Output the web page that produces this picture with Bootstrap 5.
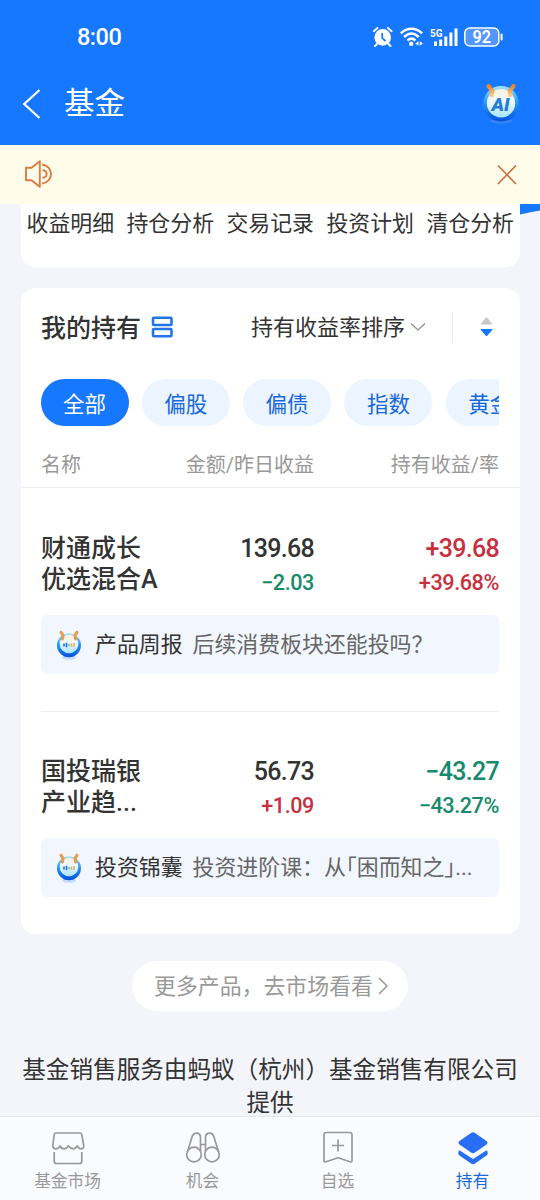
<!DOCTYPE html>
<html lang="zh-CN">
<head>
<meta charset="utf-8">
<meta name="viewport" content="width=device-width, initial-scale=1">
<title>基金</title>
<link href="https://cdn.jsdelivr.net/npm/bootstrap@5.3.0/dist/css/bootstrap.min.css" rel="stylesheet">
<style>
body{font-family:Roboto,"Noto Sans CJK SC",sans-serif;background:#f4f5fa;color:#333;height:1200px;overflow:hidden}
svg{display:block;flex:none}
.top-area{background:#1677ff;height:145px;color:#fff}
.status{height:74px;padding:0 36px 0 77px}
.clock{font-size:23.5px;line-height:24px;letter-spacing:-.5px;font-weight:500}
.title-row{height:60px;padding:0 20px 0 22px}
.page-title{font-size:30.5px;line-height:40px;font-weight:400;margin-left:23px}
.notice{background:#fffcea;height:59px;padding:0 22px 2px 24px}
.content{background:#f4f5fa;flex-basis:0}
.panel{background:#fff;margin:0 20px 0 21px}
.quick{height:63px;border-radius:0 0 14px 14px;font-size:21.9px;line-height:40px;padding:0 6px 0 5.5px;color:#333}
.hold{height:646px;margin-top:21px;border-radius:14px}
.hold-head{height:78px;padding:0 27px 0 20px}
.hold-title{font-size:25px;font-weight:500;line-height:36px;padding-top:3px}
.sort{font-size:22px;line-height:32px;padding-top:2px}
.vline{width:1px;height:31px;background:#eaeaea;margin:0 27px 0 25px}
.chips{margin:13px 21px 0 19.5px;gap:13.3px;height:47px}
.chip{width:88px;height:47px;flex:none;border-radius:24px;background:#ecf4ff;color:#1668dc;font-size:21.5px;line-height:51px;text-align:center}
.chip.on{background:#1677ff;color:#fff}
.heads{height:62px;border-bottom:1px solid #eee;font-size:20px;color:#999;padding:0 21px 0 20px;line-height:79px}
.col-a{width:137px}.col-b{width:136px;text-align:right}.col-c{flex:1;text-align:right}
.fund{height:224px;margin:0 21px 0 20px;padding-top:45px;border-bottom:1px solid #eee}
.fund:last-child{border-color:transparent;padding-top:44px}
.fname{font-size:25px;line-height:31px;font-weight:500;height:62px;white-space:nowrap}
.num{font-size:25px;line-height:31px;font-weight:500;letter-spacing:-.7px}
.subnum{font-size:21.6px;line-height:37px;font-weight:500;letter-spacing:-.4px}
.up{color:#c9303e}.down{color:#168a6a}
.tip{height:59px;margin-top:14px;background:#f2f7ff;border-radius:6px;font-size:21.9px;line-height:61px;padding-left:14px;color:#666;white-space:nowrap}
.tip b{font-weight:400;color:#333;margin:0 10px 0 12px}
.half{font-feature-settings:"halt"}
.more{width:276px;height:50px;margin:27px auto 0;background:#fff;border-radius:25px;color:#999;font-size:21.9px;padding-left:22px}
.more span{line-height:50px;padding-top:2px}
.legal{font-size:23.6px;line-height:33px;text-align:center;margin-top:43px}
.tabs{height:84px;background:#fafbff;border-top:1px solid #e6e7ea;color:#999;font-size:16.7px;line-height:20px}
.tabs svg{margin:13px auto 6px}
.tabs .col svg{position:relative}
.tabs .on{color:#1668dc}
.bluecurve{position:absolute;right:0;top:0}
</style>
</head>
<body class="d-flex flex-column">
<svg width="0" height="0" class="position-absolute">
<defs>
<linearGradient id="ring" x1="0" y1="0" x2="0" y2="1"><stop offset="0" stop-color="#a8e6fa"/><stop offset=".45" stop-color="#259cf5"/><stop offset="1" stop-color="#074fdb"/></linearGradient>
<linearGradient id="face" x1="0" y1="0" x2="0" y2="1"><stop offset="0" stop-color="#fff0da"/><stop offset=".45" stop-color="#ecf8ff"/><stop offset="1" stop-color="#a5e4ff"/></linearGradient>
<linearGradient id="horn" x1="0" y1="0" x2="0" y2="1"><stop offset="0" stop-color="#e38730"/><stop offset="1" stop-color="#ffc67b"/></linearGradient>
<symbol id="bot" viewBox="0 0 26 30">
<ellipse cx="13" cy="27.500" rx="7" ry="2.300" fill="#c3dcff"/>
<circle cx="13" cy="15.200" r="12" fill="url(#ring)"/><circle cx="13" cy="14" r="9.300" fill="url(#face)"/>
<path d="M5 2.200l2 3.200-.6 3.500M21 2.200l-2 3.200.6 3.500" fill="none" stroke="#ed9a48" stroke-width="3" stroke-linecap="round" stroke-linejoin="round"/>
<path d="M8 13.500v3M10.500 12.800v4.400" stroke="#1766d8" stroke-width="1.500"/><path d="M13 14v2.200" stroke="#38b6c8" stroke-width="1.400"/><path d="M15.500 13.500v3.200M18 13v4" stroke="#e6ad55" stroke-width="1.500"/>
</symbol>
</defs>
</svg>
<header class="top-area flex-shrink-0">
<div class="status d-flex align-items-center justify-content-between">
<span class="clock">8:00</span>
<svg width="132" height="24" viewBox="0 0 132 24" fill="none" stroke="#fff">
<circle cx="10.700" cy="12.400" r="8.300" fill="#fff" stroke="none"/><path d="M1.800 6.200L5.500 3M19.600 6.200L15.900 3M5 19l-2 2M16.500 19l2 2" stroke-width="2" stroke-linecap="round"/><path d="M10.200 8v5.200l3.300 2.800" stroke="#1677ff" stroke-width="1.700"/>
<path d="M28.800 8.300c6.500-6 14.800-6 21.300 0M32 12c4.800-4.500 10-4.500 14.800 0M35.500 15.500c2.500-2.300 5.400-2.300 7.900 0" stroke-width="2.500"/><circle cx="39.200" cy="18.800" r="2.200" fill="#fff" stroke="none"/><path d="M46.500 16.200v4.600l-3.200-2.300zM47.700 16.200v4.600l3.200-2.300z" fill="#fff" stroke="none"/>
<path d="M63.500 21v-4.500M68.700 21v-6.500M73.800 21v-9.500M78.900 21V7.500M84 21V3.500" stroke-width="3"/>
<text x="58" y="12" font-size="11.500" font-weight="700" fill="#fff" stroke="none" textLength="12.500" lengthAdjust="spacingAndGlyphs">5G</text>
<rect x="92.800" y="3" width="34" height="18" rx="5" fill="#5197ff" stroke-width="1.500"/><path d="M129.600 9.500v5" stroke-width="2" stroke-linecap="round"/>
<text x="109.700" y="18.200" font-size="17.500" font-weight="600" text-anchor="middle" fill="#fff" stroke="none" textLength="18.500" lengthAdjust="spacingAndGlyphs">92</text>
</svg>
</div>
<div class="title-row d-flex align-items-center">
<svg width="19" height="30" viewBox="0 0 19 30"><path d="M17.500 1L2.200 15l15.300 14" fill="none" stroke="#fff" stroke-width="2.200"/></svg>
<h1 class="page-title mb-0">基金</h1>
<svg class="ms-auto" width="38" height="40" viewBox="0 0 38 40">
<ellipse cx="19" cy="37" rx="11" ry="2.500" fill="#3c86ee"/>
<circle cx="19" cy="19.800" r="17.800" fill="url(#ring)"/><circle cx="19" cy="19.200" r="14.200" fill="url(#face)"/>
<path d="M6.500 2l3.800 5-.8 4M31.500 2l-3.800 5 .8 4" fill="none" stroke="url(#horn)" stroke-width="4" stroke-linecap="round" stroke-linejoin="round"/>
<text x="18.500" y="26.500" font-size="19" font-weight="900" font-style="italic" fill="#257cd8" text-anchor="middle">AI</text></svg>
</div>
</header>
<div class="notice d-flex align-items-center justify-content-between flex-shrink-0">
<svg width="30" height="30" viewBox="0 0 30 30" fill="none" stroke="#dc7c43" stroke-width="1.900" stroke-linejoin="round"><path d="M2 8.700h5.500L15.800 2.200v25.600L7.500 21.300H2zM18 5.500c12 1.500 12 17.500 0 19M18.500 11c5.500 1 5.500 7 0 8"/></svg>
<svg width="22" height="22" viewBox="0 0 22 22"><path d="M2 2.500l18 18.500M20 2.500L2 21" stroke="#d06c39" stroke-width="1.600"/></svg>
</div>
<main class="content flex-grow-1 overflow-hidden position-relative">
<svg class="bluecurve" width="20" height="12" viewBox="0 0 20 12"><path d="M0 0h20v6.500Q11 8 0 10.500z" fill="#1677ff"/></svg>
<section class="panel quick d-flex justify-content-between text-nowrap"><span>收益明细</span><span>持仓分析</span><span>交易记录</span><span>投资计划</span><span>清仓分析</span></section>
<section class="panel hold overflow-hidden">
<div class="hold-head d-flex align-items-center">
<span class="hold-title">我的持有</span>
<svg class="ms-2" width="25" height="24" viewBox="0 0 25 24" fill="none" stroke="#2474e5" stroke-width="2.600"><rect x="4" y="2.800" width="18.500" height="7.200" rx="1"/><rect x="4" y="14" width="18.500" height="7.200" rx="1"/></svg>
<span class="sort ms-auto">持有收益率排序</span>
<svg class="ms-1" width="18" height="12" viewBox="0 0 18 12"><path d="M2 2.500l7 6.500 7-6.500" fill="none" stroke="#999" stroke-width="1.500"/></svg>
<i class="vline"></i>
<svg width="13" height="22" viewBox="0 0 13 22"><path d="M6.500 1.500l5.300 6.500H1.200z" fill="#c8c8c8" stroke="#c8c8c8" stroke-linejoin="round"/><path d="M6.500 20L1 13.500h11z" fill="#1677ff" stroke="#1677ff" stroke-linejoin="round"/></svg>
</div>
<div class="chips d-flex overflow-hidden"><span class="chip on">全部</span><span class="chip">偏股</span><span class="chip">偏债</span><span class="chip">指数</span><span class="chip">黄金</span></div>
<div class="heads d-flex"><span class="col-a">名称</span><span class="col-b">金额/昨日收益</span><span class="col-c">持有收益/率</span></div>
<article class="fund">
<div class="d-flex"><div class="col-a fname">财通成长<br>优选混合A</div><div class="col-b"><div class="num">139.68</div><div class="subnum down">−2.03</div></div><div class="col-c"><div class="num up">+39.68</div><div class="subnum up">+39.68%</div></div></div>
<div class="tip d-flex align-items-center"><svg width="28" height="30"><use href="#bot"/></svg><b>产品周报</b><span>后续消费板块还能投吗？</span></div>
</article>
<article class="fund">
<div class="d-flex"><div class="col-a fname">国投瑞银<br>产业趋...</div><div class="col-b"><div class="num">56.73</div><div class="subnum up">+1.09</div></div><div class="col-c"><div class="num down">−43.27</div><div class="subnum down">−43.27%</div></div></div>
<div class="tip d-flex align-items-center"><svg width="28" height="30"><use href="#bot"/></svg><b>投资锦囊</b><span>投资进阶课：从<span class="half">「</span>困而知之<span class="half">」</span>...</span></div>
</article>
</section>
<div class="more d-flex align-items-center"><span>更多产品，去市场看看</span><svg width="12" height="18" viewBox="0 0 12 18" class="ms-1"><path d="M2 1l8 8-8 8" fill="none" stroke="#999" stroke-width="1.500"/></svg></div>
<div class="legal text-nowrap">基金销售服务由蚂蚁（杭州）基金销售有限公司<br>提供</div>
</main>
<nav class="tabs row g-0 text-center flex-shrink-0">
<div class="col"><svg width="36" height="36" viewBox="0 0 36 36" fill="none" stroke="#999" stroke-width="1.700" stroke-linejoin="round"><path d="M6 3h24q1.500 0 1.800 1.500l2 11.500q0 2.800-2.800 2.800-2.200 0-3.700-2.800-1.700 2.800-4.200 2.800T18.500 16q-2 2.800-4.500 2.800T10 16q-1.700 2.800-4 2.800-3.200 0-3.200-2.800L4.200 4.500Q4.500 3 6 3zM4.200 22v9q0 2.500 2.500 2.500h22.600q2.500 0 2.500-2.500v-9"/></svg>基金市场</div>
<div class="col"><svg width="36" height="36" viewBox="0 0 36 36" fill="none" stroke="#999" stroke-width="1.700"><circle cx="9" cy="24.500" r="7.300"/><circle cx="27" cy="24.500" r="7.300"/><path d="M2.400 22L7.200 6.500q1-3.300 4-3.300 4.300 0 4.300 4.500V21M33.600 22L28.800 6.500q-1-3.300-4-3.300-4.300 0-4.300 4.500V21M15.500 14.500h5"/></svg>机会</div>
<div class="col"><svg width="36" height="36" viewBox="0 0 36 36" fill="none" stroke="#999" stroke-width="1.700" stroke-linejoin="round"><path d="M6.500 2.500h23q2.500 0 2.500 2.500v25.500q0 2-2 1.300L18 27.800 6 31.800q-2 .7-2-1.300V5q0-2.500 2.500-2.500zM18 9.500v12M12 15.500h12"/></svg>自选</div>
<div class="col on"><svg width="36" height="36" viewBox="0 0 36 36" fill="#276ef5"><path d="M16 3q2-1.400 4 0l11.500 8q2 1.700 0 3.500L20 22.500q-2 1.400-4 0L4.500 14.500q-2-1.800 0-3.500z"/><path d="M3.500 21.500q.5-1.500 2-.5L18 29l12.500-8q1.500-1 2 .5 1 2.500-1 4L20 33.500q-2 1.400-4 0L4.500 25.500q-2-1.500-1-4z"/></svg>持有</div>
</nav>
<script src="https://cdn.jsdelivr.net/npm/bootstrap@5.3.0/dist/js/bootstrap.bundle.min.js"></script>
</body>
</html>
